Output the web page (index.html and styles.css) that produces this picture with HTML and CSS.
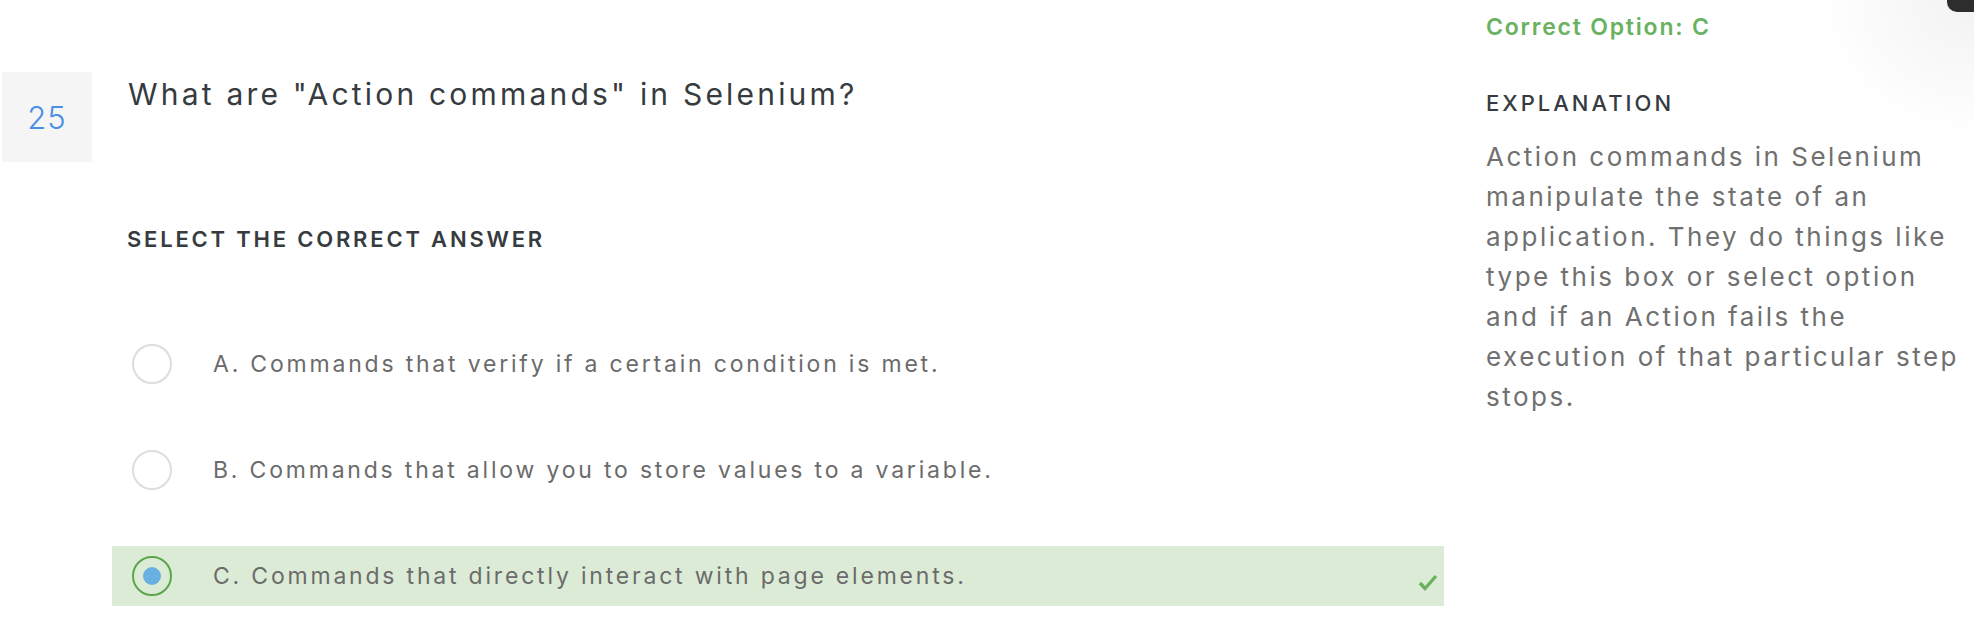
FILE: index.html
```html
<!DOCTYPE html>
<html lang="en">
<head>
<meta charset="utf-8">
<title>Question 25</title>
<link rel="stylesheet" href="styles.css">
</head>
<body>
<div class="page">
  <main class="main">
    <div class="question">
      <div class="num">25</div>
      <h1 class="title">What are "Action commands" in Selenium?</h1>
    </div>
    <section class="answers">
      <h2 class="heading">SELECT THE CORRECT ANSWER</h2>
      <ul class="options">
        <li class="option">
          <span class="radio"></span>
          <span class="label">A. Commands that verify if a certain condition is met.</span>
        </li>
        <li class="option">
          <span class="radio"></span>
          <span class="label">B. Commands that allow you to store values to a variable.</span>
        </li>
        <li class="option option-correct">
          <span class="radio radio-checked"><span class="dot"></span></span>
          <span class="label">C. Commands that directly interact with page elements.</span>
          <svg class="check" width="20" height="17" viewBox="0 0 20 17"><polyline points="2,9 7,14.5 18,2" fill="none" stroke="#6cb25e" stroke-width="3.4"/></svg>
        </li>
      </ul>
    </section>
  </main>
  <aside class="aside">
    <div class="correct">Correct Option: C</div>
    <h3 class="expl-title">EXPLANATION</h3>
    <p class="expl">Action commands in Selenium<br>manipulate the state of an<br>application. They do things like<br>type this box or select option<br>and if an Action fails the<br>execution of that particular step<br>stops.</p>
  </aside>
  <div class="corner"></div>
  <div class="glow"></div>
</div>
</body>
</html>
```

FILE: styles.css
```css
html, body {
  margin: 0;
  padding: 0;
  background: #ffffff;
}
body {
  font-family: Inter, "Open Sans", "Liberation Sans", sans-serif;
  width: 1974px;
  height: 634px;
  overflow: hidden;
}
.page {
  position: relative;
  display: flex;
  width: 1974px;
  height: 634px;
}
.main {
  width: 1444px;
  padding-top: 72px;
  flex: none;
}
.question {
  display: flex;
  align-items: flex-start;
}
.num {
  width: 90px;
  height: 90px;
  margin-left: 2px;
  background: #f5f5f5;
  display: flex;
  align-items: center;
  justify-content: center;
  font-size: 31px;
  font-weight: 300;
  color: #4a8ee6;
  letter-spacing: 1px;
  flex: none;
}
.title {
  margin: 4px 0 0 36px;
  font-size: 30px;
  line-height: 36px;
  font-weight: 400;
  color: #363b40;
  letter-spacing: 3.2px;
}
.answers {
  margin-left: 112px;
}
.heading {
  margin: 64px 0 0 15px;
  font-size: 22px;
  line-height: 26px;
  font-weight: 600;
  color: #363b40;
  letter-spacing: 2.8px;
}
.options {
  list-style: none;
  margin: 82px 0 0 0;
  padding: 0;
  display: flex;
  flex-direction: column;
  gap: 46px;
}
.option {
  display: flex;
  align-items: center;
  height: 60px;
  padding-left: 20px;
  padding-right: 6px;
}
.option-correct {
  background: #dcebd6;
}
.radio {
  width: 40px;
  height: 40px;
  box-sizing: border-box;
  border: 2px solid #dddddd;
  border-radius: 50%;
  background: #ffffff;
  flex: none;
  display: flex;
  align-items: center;
  justify-content: center;
}
.radio-checked {
  border-color: #5aa64b;
  background: transparent;
}
.dot {
  width: 18px;
  height: 18px;
  border-radius: 50%;
  background: #6aafe2;
}
.label {
  margin-left: 41px;
  font-size: 23px;
  color: #6b6b6b;
  letter-spacing: 2.8px;
  flex: 1;
}
.check {
  flex: none;
  margin-top: 12px;
}
.aside {
  margin-left: 42px;
  width: 486px;
  flex: none;
  padding-top: 13px;
}
.correct {
  font-size: 23px;
  line-height: 28px;
  font-weight: 600;
  color: #6ab161;
  letter-spacing: 1.8px;
}
.expl-title {
  margin: 49px 0 0 0;
  font-size: 22px;
  line-height: 26px;
  font-weight: 500;
  color: #363b40;
  letter-spacing: 3px;
}
.expl {
  margin: 21px 0 0 0;
  font-size: 26px;
  line-height: 40px;
  color: #707070;
  letter-spacing: 2.5px;
  white-space: nowrap;
}
.corner {
  position: absolute;
  top: 0;
  right: 0;
  width: 27px;
  height: 12px;
  background: #2f2f2f;
  border-bottom-left-radius: 10px;
}
.glow {
  position: absolute;
  top: 0;
  right: 0;
  width: 160px;
  height: 140px;
  background: radial-gradient(ellipse at top right, rgba(0,0,0,0.05), rgba(0,0,0,0) 70%);
  pointer-events: none;
}
```
